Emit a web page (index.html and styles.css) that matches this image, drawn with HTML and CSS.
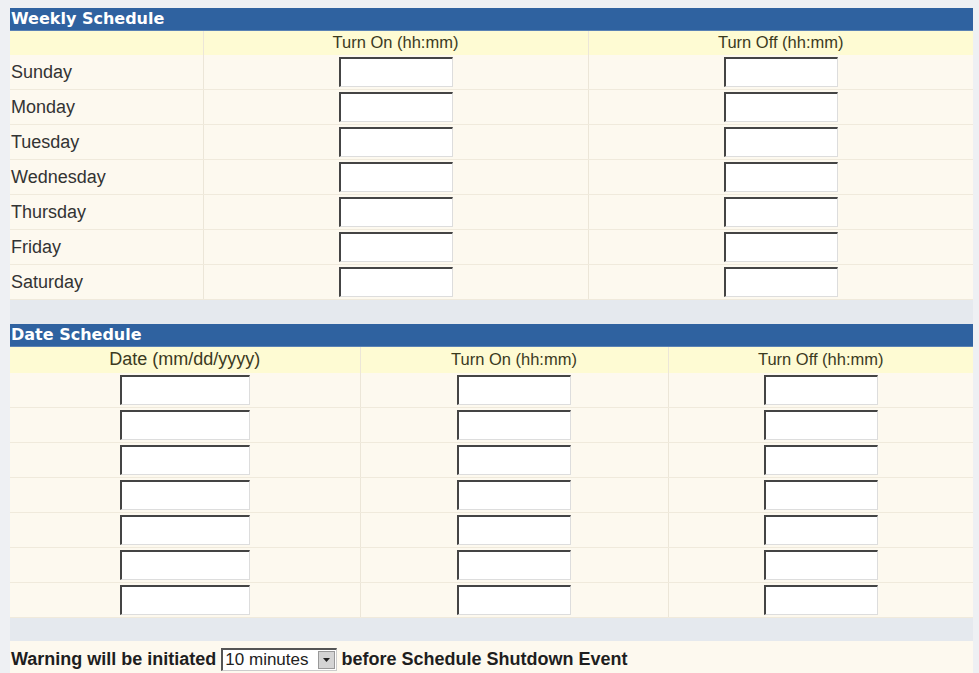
FILE: index.html
```html
<!DOCTYPE html>
<html lang="en">
<head>
  <meta charset="UTF-8" />
  <title>Shutdown Schedule</title>
  <link rel="stylesheet" href="styles.css">
</head>
<body>
  <div class="page">

    <table class="sched weekly">
      <colgroup>
        <col class="w-day">
        <col class="w-mid">
        <col>
      </colgroup>
      <tr><th class="title" colspan="3">Weekly Schedule</th></tr>
      <tr class="cols">
        <td></td>
        <td>Turn On (hh:mm)</td>
        <td>Turn Off (hh:mm)</td>
      </tr>
      <tr><td class="day">Sunday</td><td><input type="text"></td><td><input type="text"></td></tr>
      <tr><td class="day">Monday</td><td><input type="text"></td><td><input type="text"></td></tr>
      <tr><td class="day">Tuesday</td><td><input type="text"></td><td><input type="text"></td></tr>
      <tr><td class="day">Wednesday</td><td><input type="text"></td><td><input type="text"></td></tr>
      <tr><td class="day">Thursday</td><td><input type="text"></td><td><input type="text"></td></tr>
      <tr><td class="day">Friday</td><td><input type="text"></td><td><input type="text"></td></tr>
      <tr><td class="day">Saturday</td><td><input type="text"></td><td><input type="text"></td></tr>
    </table>

    <div class="spacer first"></div>

    <table class="sched dated">
      <colgroup>
        <col class="w-date">
        <col class="w-on">
        <col>
      </colgroup>
      <tr><th class="title" colspan="3">Date Schedule</th></tr>
      <tr class="cols">
        <td>Date (mm/dd/yyyy)</td>
        <td>Turn On (hh:mm)</td>
        <td>Turn Off (hh:mm)</td>
      </tr>
      <tr><td><input type="text" class="wide"></td><td><input type="text"></td><td><input type="text"></td></tr>
      <tr><td><input type="text" class="wide"></td><td><input type="text"></td><td><input type="text"></td></tr>
      <tr><td><input type="text" class="wide"></td><td><input type="text"></td><td><input type="text"></td></tr>
      <tr><td><input type="text" class="wide"></td><td><input type="text"></td><td><input type="text"></td></tr>
      <tr><td><input type="text" class="wide"></td><td><input type="text"></td><td><input type="text"></td></tr>
      <tr><td><input type="text" class="wide"></td><td><input type="text"></td><td><input type="text"></td></tr>
      <tr><td><input type="text" class="wide"></td><td><input type="text"></td><td><input type="text"></td></tr>
    </table>

    <div class="spacer"></div>

    <div class="warning">
      Warning will be initiated
      <span class="dropdown">
        <span class="dd-text">10 minutes</span>
        <span class="dd-btn">
          <svg width="7" height="4" viewBox="0 0 7 4"><path d="M0 0h7L3.5 4z" fill="#222"/></svg>
        </span>
      </span>
      before Schedule Shutdown Event
    </div>

  </div>
</body>
</html>
```

FILE: styles.css
```css
body {
  margin: 0;
  background: #eef0f3;
  font-family: "Liberation Sans", Arial, sans-serif;
  color: #333;
}
.page {
  width: 963px;
  margin: 8px 0 0 10px;
}
table.sched {
  width: 100%;
  border-collapse: collapse;
  table-layout: fixed;
  background: #fdf9ef;
}
.weekly .w-day {
  width: 193px;
}
.weekly .w-mid {
  width: 385px;
}
.dated .w-date {
  width: 350px;
}
.dated .w-on {
  width: 308px;
}
.sched th.title {
  background: #2f62a0;
  color: #fff;
  font-family: "DejaVu Sans", Verdana, sans-serif;
  font-size: 16px;
  font-weight: bold;
  text-align: left;
  height: 22px;
  line-height: 18px;
  padding: 0 0 0 1px;
  border-bottom: 1px solid #5a82b4;
}
.sched td {
  height: 34px;
  padding: 0;
  text-align: center;
  border-bottom: 1px solid #f0eadc;
  border-left: 1px solid #ece6d8;
  font-size: 16.5px;
}
.sched td:first-child {
  border-left: none;
}
.sched tr.cols td {
  height: 24px;
  background: #fefbd3;
  color: #3b3a1e;
  border-bottom: none;
  line-height: 23px;
  vertical-align: top;
}
.dated tr.cols td {
  height: 26px;
  line-height: 25px;
}
.dated tr.cols td:first-child {
  font-size: 18px;
}
.weekly td.day {
  text-align: left;
  padding-left: 1px;
  font-size: 18px;
  color: #333;
}
.sched input {
  width: 114px;
  height: 30px;
  box-sizing: border-box;
  margin: 0;
  vertical-align: middle;
  background: #fff;
  border-style: solid;
  border-width: 2px 1px 1px 2px;
  border-color: #444 #ddd #ddd #444;
}
.sched input.wide {
  width: 130px;
}
.spacer {
  height: 23px;
  background: #e5e9ee;
}
.spacer.first {
  height: 24px;
}
.warning {
  background: #fdf9ef;
  height: 33px;
  display: flex;
  align-items: center;
  gap: 5px;
  font-weight: bold;
  font-size: 18px;
  color: #1e1e1e;
  padding-left: 1px;
  padding-top: 4px;
  box-sizing: border-box;
}
.dropdown {
  display: inline-flex;
  align-items: stretch;
  height: 23px;
  box-sizing: border-box;
  border-style: solid;
  border-width: 2px 1px 1px 2px;
  border-color: #555 #ccc #ccc #555;
  background: #fff;
  font-weight: normal;
}
.dd-text {
  padding: 0 8px 0 2px;
  font-size: 17px;
  line-height: 20px;
  color: #222;
}
.dd-btn {
  width: 15px;
  margin: 1px;
  background: #d4d4d4;
  border: 1px solid #999;
  display: flex;
  align-items: center;
  justify-content: center;
}
```
